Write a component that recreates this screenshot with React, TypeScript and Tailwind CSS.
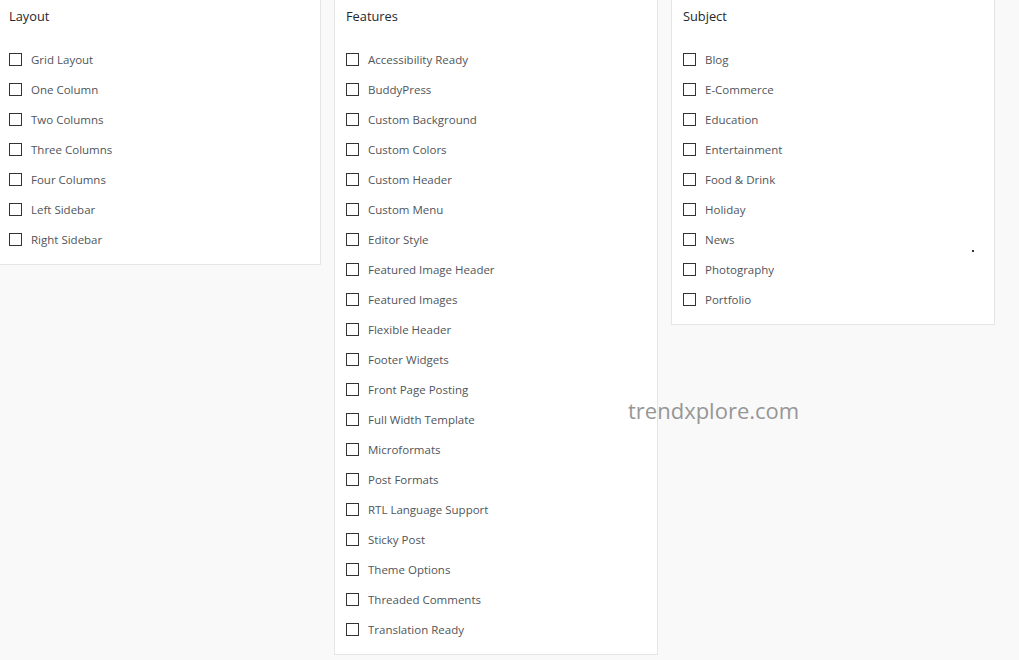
import React from "react";

const layout = ["Grid Layout", "One Column", "Two Columns", "Three Columns", "Four Columns", "Left Sidebar", "Right Sidebar"];
const features = [
  "Accessibility Ready", "BuddyPress", "Custom Background", "Custom Colors", "Custom Header", "Custom Menu",
  "Editor Style", "Featured Image Header", "Featured Images", "Flexible Header", "Footer Widgets",
  "Front Page Posting", "Full Width Template", "Microformats", "Post Formats", "RTL Language Support",
  "Sticky Post", "Theme Options", "Threaded Comments", "Translation Ready",
];
const subject = ["Blog", "E-Commerce", "Education", "Entertainment", "Food & Drink", "Holiday", "News", "Photography", "Portfolio"];

function Panel({ title, items }: { title: string; items: string[] }) {
  return (
    <div className="w-[324px] shrink-0 bg-white border border-[#e5e5e5] px-[11px] pt-[9px] pb-[9px]">
      <h3 className="text-[12.8px] leading-[20px] text-[#23282d] font-normal">{title}</h3>
      <ul className="mt-[19px]">
        {items.map((it) => (
          <li key={it} className="h-[30px] flex items-center">
            <span className="w-[13px] h-[13px] border border-[#333] bg-white shrink-0 -mt-[1px]" />
            <span className="ml-[9px] text-[11.5px] text-[#50555a]">{it}</span>
          </li>
        ))}
      </ul>
    </div>
  );
}

export default function App() {
  return (
    <div
      className="relative min-h-screen bg-[#f9f9f9] overflow-hidden"
      style={{ fontFamily: '"Open Sans", "Noto Sans", sans-serif' }}
    >
      <div className="flex items-start gap-[13px] -ml-[3px] -mt-[4px]">
        <Panel title="Layout" items={layout} />
        <Panel title="Features" items={features} />
        <Panel title="Subject" items={subject} />
      </div>
      <div className="absolute left-[628px] top-[395px] text-[22px] leading-[30px] text-[#8c8c8c] opacity-90">
        trendxplore.com
      </div>
      <div className="absolute left-[972px] top-[250px] w-[2px] h-[2px] bg-[#333]" />
    </div>
  );
}
